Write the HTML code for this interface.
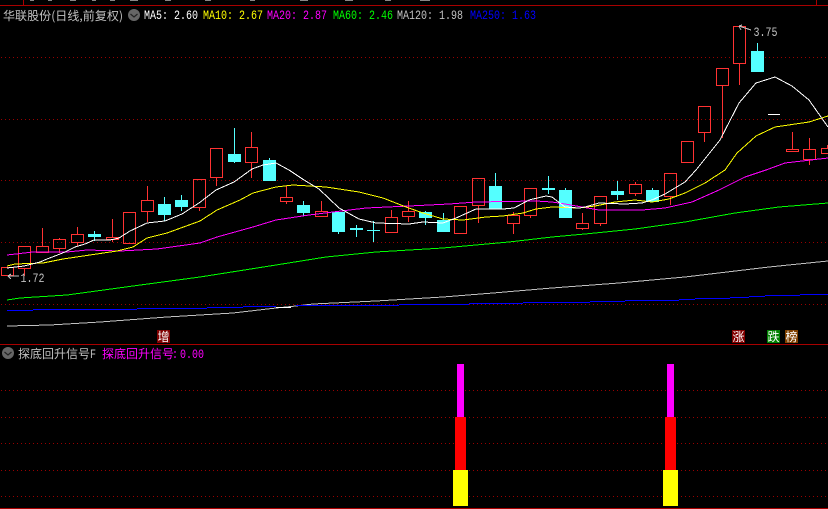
<!DOCTYPE html>
<html><head><meta charset="utf-8"><style>
html,body{margin:0;padding:0;background:#000;width:828px;height:509px;overflow:hidden}
svg{display:block}
text{font-family:"Liberation Mono","WenQuanYi Zen Hei",monospace;font-size:13px}
.c{font-family:"WenQuanYi Zen Hei","Noto Sans CJK SC",sans-serif;font-size:12px}
</style></head><body>
<svg width="828" height="509" viewBox="0 0 828 509" xmlns="http://www.w3.org/2000/svg">
<defs><pattern id="d" x="0" y="0" width="4" height="509" patternUnits="userSpaceOnUse"><rect x="1" y="0" width="1" height="509" fill="#990000"/></pattern></defs>
<rect width="828" height="509" fill="#000"/>
<g shape-rendering="crispEdges" fill="none">
<path d="M0 5.5H828M23.5 0V5M816.5 0V5M0 344.5H828M0 508.5H828" stroke="#a80000"/>
<g fill="url(#d)"><rect y="57" width="828" height="1"/><rect y="119" width="828" height="1"/><rect y="180" width="828" height="1"/><rect y="242" width="828" height="1"/><rect y="304" width="828" height="1"/><rect y="390" width="828" height="1"/><rect y="417" width="828" height="1"/><rect y="443" width="828" height="1"/><rect y="470" width="828" height="1"/><rect y="496" width="828" height="1"/></g>
<path d="M30 .5h4M48 .5h4M70 .5h6M92 .5h4M110 .5h5M130 .5h8M165 .5h6M205 .5h6M250 .5h5M300 .5h8M345 .5h8M385 .5h6M420 .5h10" stroke="#888"/>
<path stroke="#ff3232" d="M1.5 267.5h12v8h-12zM18.5 246.5h12v22h-12zM24.5 269V276M36.5 246.5h12v6h-12zM42.5 228V246M53.5 239.5h12v9h-12zM59.5 238v1M59.5 249v4M71.5 234.5h12v8h-12zM77.5 227v7M77.5 243v3M106.5 237.5h12v2h-12zM112.5 219v18M112.5 240v2M123.5 212.5h12v31h-12zM141.5 200.5h12v11h-12zM147.5 186v14M147.5 212v10M193.5 179.5h12v28h-12zM199.5 208v3M210.5 148.5h12v29h-12zM216.5 178v8M245.5 147.5h12v15h-12zM251.5 132v15M251.5 163v15M280.5 197.5h12v4h-12zM286.5 186v11M286.5 202v2M315.5 211.5h12v5h-12zM321.5 201v10M385.5 217.5h12v15h-12zM391.5 210v7M402.5 211.5h12v5h-12zM408.5 201v10M408.5 217v5M454.5 206.5h12v27h-12zM472.5 178.5h12v27h-12zM478.5 206v17M507.5 215.5h12v8h-12zM513.5 212v3M513.5 224v10M524.5 188.5h12v27h-12zM530.5 216v2M576.5 223.5h12v5h-12zM582.5 213v10M582.5 229v1M594.5 196.5h12v27h-12zM600.5 224v2M629.5 184.5h12v9h-12zM635.5 182v2M635.5 194v2M664.5 173.5h12v23h-12zM670.5 197v8M681.5 141.5h12v21h-12zM698.5 106.5h12v26h-12zM704.5 133v9M716.5 68.5h12v17h-12zM722.5 86v52M733.5 26.5h12v37h-12zM739.5 64v21M786.5 149.5h12v2h-12zM792.5 132v17M803.5 149.5h12v10h-12zM809.5 138v11M809.5 160v5M821.5 148.5h12v5h-12zM827.5 145v3"/>
<path stroke="#54ffff" d="M94.5 231V241M164.5 197V221M181.5 195V211M234.5 128V163M269.5 158V181M303.5 201V216M338.5 212V234M356.5 225V237M373.5 221V242M425.5 211V225M443.5 213V232M495.5 173V209M548.5 176V194M565.5 188V190M617.5 181V200M652.5 188V202M757.5 43V51"/>
<g fill="#54ffff">
<rect x="88" y="234" width="13" height="3"/><rect x="158" y="204" width="13" height="11"/><rect x="175" y="200" width="13" height="7"/><rect x="228" y="154" width="13" height="8"/><rect x="263" y="160" width="13" height="21"/><rect x="297" y="205" width="13" height="8"/><rect x="332" y="212" width="13" height="20"/><rect x="350" y="228" width="13" height="2"/><rect x="367" y="230" width="13" height="1"/><rect x="419" y="212" width="13" height="6"/><rect x="437" y="220" width="13" height="12"/><rect x="489" y="186" width="13" height="23"/><rect x="542" y="188" width="13" height="2"/><rect x="559" y="190" width="13" height="28"/><rect x="611" y="191" width="13" height="4"/><rect x="646" y="190" width="13" height="12"/><rect x="751" y="51" width="13" height="21"/>
</g>
<path d="M768 114.5h12" stroke="#fff"/>
<polyline stroke="#c0c0c0" points="7,326 50,325 100,322 167,317 233,313 276,308 296,306 313,304 376,301 443,297 493,293 552,288 619,283 685,277 769,267 828,261"/>
<path stroke="#0000ff" d="M7 310.5H33M33 309.5H137M137 308.5H207M207 307.5H243M243 306.5H276M296 305.5H399M399 304.5H469M469 303.5H523M523 302.5H590M590 301.5H625M625 300.5H679M679 299.5H695M695 298.5H730M730 297.5H749M749 296.5H765M765 295.5H800M800 294.5H828"/>
<path stroke="#fff" d="M276 307.5H291"/>
<polyline stroke="#00ff00" points="7,300 20,298 67,295 133,286 200,277 276,265 326,257 376,252 443,248 509,242 552,237 585,234 635,229 685,222 735,213 779,207 828,203"/>
<polyline stroke="#ff00ff" points="7,255 33,252 67,252 87,250 120,251 157,249 200,243 217,237 253,227 276,220 309,215 333,212 366,208 409,206 449,204 476,202 536,201 552,202 565,204 582,207 599,210 642,210 665,208 692,202 719,190 745,177 766,170 785,163 828,158"/>
<polyline stroke="#ffff00" points="7,266 15,264 43,263 63,259 90,255 117,251 133,247 147,238 167,233 200,221 217,210 240,200 253,193 276,187 293,185 326,187 359,192 383,198 406,207 423,213 443,219 463,220 486,217 503,216 523,213 536,209 552,207 579,208 595,206 615,202 635,200 652,202 669,199 685,193 705,183 725,170 737,153 756,136 775,127 809,122 828,116"/>
<polyline stroke="#ffffff" points="7,268 24,266 40,262 47,259 55,256 65,252 75,247 85,244 94,240 110,240 119,238 130,231 147,223 165,221 182,214 199,203 216,190 234,182 252,169 263,165 276,163 289,170 304,180 319,189 339,208 359,219 376,223 409,224 423,222 443,223 456,218 476,209 503,209 514,208 529,200 546,196 552,197 565,207 579,208 585,207 599,203 625,204 642,203 652,200 665,194 685,182 696,170 720,140 739,103 756,83 775,77 792,86 809,100 828,127"/>
<path stroke="#c0c0c0" d="M739 26l12 4M739 26l3-1M739 26l2 4M8 276h11M8 276l3-2M8 276l3 3"/>
<g stroke="none">
<rect x="457" y="364" width="7" height="53" fill="#f0f"/><rect x="455" y="417" width="11" height="53" fill="#f00"/><rect x="453" y="470" width="15" height="36" fill="#ff0"/>
<rect x="667" y="364" width="7" height="53" fill="#f0f"/><rect x="665" y="417" width="11" height="53" fill="#f00"/><rect x="663" y="470" width="15" height="36" fill="#ff0"/>
<rect x="157" y="330" width="13" height="13" fill="#800000"/><rect x="732" y="330" width="13" height="13" fill="#800000"/><rect x="767" y="330" width="13" height="13" fill="#008000"/><rect x="785" y="330" width="13" height="13" fill="#804000"/>
</g>
</g>
<circle cx="134" cy="15" r="6" fill="#666"/><path d="M130.5 14l3.5 3 3.5-3" fill="none" stroke="#222" stroke-width="1.2"/>
<circle cx="8" cy="353" r="6" fill="#666"/><path d="M4.5 352l3.5 3 3.5-3" fill="none" stroke="#222" stroke-width="1.2"/>
<text class="c" x="3" y="20" fill="#c0c0c0" textLength="120" lengthAdjust="spacing">华联股份(日线,前复权)</text>
<text x="144" y="19" fill="#fff" textLength="54" lengthAdjust="spacingAndGlyphs">MA5: 2.60</text>
<text x="203" y="19" fill="#ff0" textLength="60" lengthAdjust="spacingAndGlyphs">MA10: 2.67</text>
<text x="267" y="19" fill="#f0f" textLength="60" lengthAdjust="spacingAndGlyphs">MA20: 2.87</text>
<text x="333" y="19" fill="#0f0" textLength="60" lengthAdjust="spacingAndGlyphs">MA60: 2.46</text>
<text x="397" y="19" fill="#c0c0c0" textLength="66" lengthAdjust="spacingAndGlyphs">MA120: 1.98</text>
<text x="470" y="19" fill="#00f" textLength="66" lengthAdjust="spacingAndGlyphs">MA250: 1.63</text>
<text x="753.500" y="36" fill="#c0c0c0" textLength="24" lengthAdjust="spacingAndGlyphs">3.75</text>
<text x="20.500" y="282" fill="#c0c0c0" textLength="24" lengthAdjust="spacingAndGlyphs">1.72</text>
<text class="c" x="157.500" y="341" fill="#fff">增</text>
<text class="c" x="732.500" y="341" fill="#fff">涨</text>
<text class="c" x="767.500" y="341" fill="#fff">跌</text>
<text class="c" x="785.500" y="341" fill="#fff">榜</text>
<text class="c" x="18" y="358" fill="#c0c0c0" textLength="72" lengthAdjust="spacing">探底回升信号</text>
<text x="90" y="358" fill="#c0c0c0" textLength="6" lengthAdjust="spacingAndGlyphs">F</text>
<text class="c" x="102" y="358" fill="#f0f" textLength="72" lengthAdjust="spacing">探底回升信号</text>
<text x="172" y="358" fill="#f0f" textLength="6" lengthAdjust="spacingAndGlyphs">:</text>
<text x="180" y="358" fill="#f0f" textLength="24" lengthAdjust="spacingAndGlyphs">0.00</text>
</svg>
</body></html>
